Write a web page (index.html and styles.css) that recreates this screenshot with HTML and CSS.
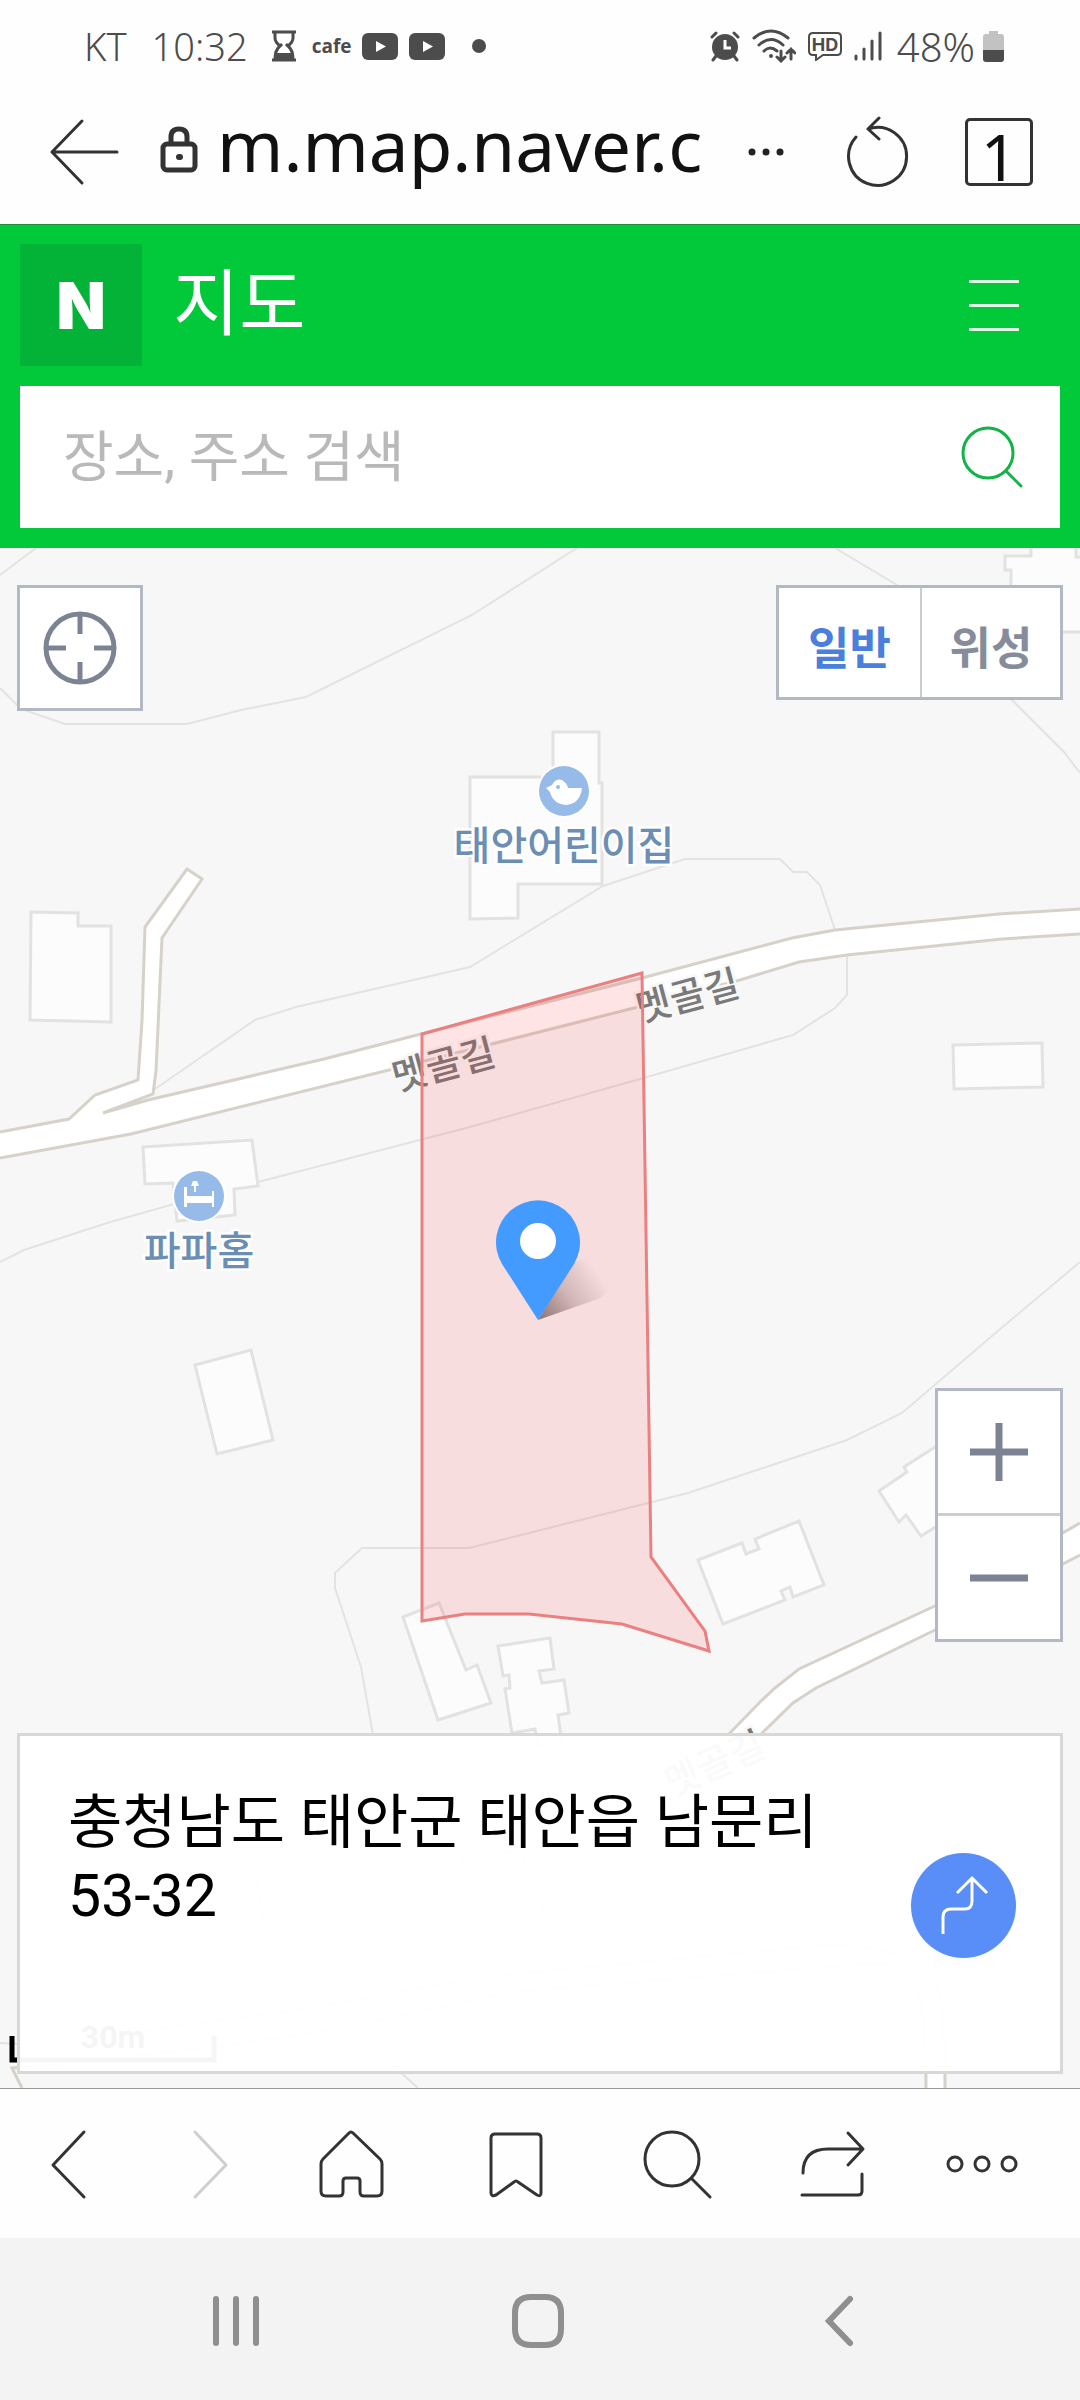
FILE: index.html
```html
<!DOCTYPE html>
<html lang="ko">
<head>
<meta charset="utf-8">
<meta name="viewport" content="width=device-width, initial-scale=1">
<title>네이버 지도</title>
<link rel="stylesheet" href="styles.css">
</head>
<body>
<div class="screen">

  <div class="status">
    <div class="status-left">
      <span class="carrier">KT</span>
      <span class="clock">10:32</span>
      <svg class="hourglass" width="26" height="32" viewBox="0 0 26 32" fill="none" stroke="currentColor" stroke-width="3">
        <path d="M1 2H25M1 30H25M4 2V8Q4 12 9 16Q4 20 4 29M22 2V8Q22 12 17 16Q22 20 22 29M9 16L11 14M17 16L15 14"/>
        <path fill="currentColor" stroke="none" d="M5 23H21V30H5Z"/>
      </svg>
      <span class="cafe">cafe</span>
      <svg width="36" height="27" viewBox="0 0 36 27"><rect width="36" height="27" rx="6" fill="currentColor"/><path d="M14 8V19L24 13.500Z" fill="#fff"/></svg>
      <svg width="36" height="27" viewBox="0 0 36 27"><rect width="36" height="27" rx="6" fill="currentColor"/><path d="M14 8V19L24 13.500Z" fill="#fff"/></svg>
      <span class="dot"></span>
    </div>
    <div class="status-right">
      <svg width="30" height="32" viewBox="0 0 30 32" fill="none" stroke="currentColor" stroke-width="3" stroke-linecap="round">
        <circle cx="15" cy="17" r="13" fill="currentColor" stroke="none"/>
        <path d="M2 7L6 3M28 7L24 3M3 30L6 26M27 30L24 26"/>
        <path d="M15 10V18H21" stroke="#fff" stroke-linecap="butt"/>
      </svg>
      <svg width="44" height="34" viewBox="0 0 44 34" fill="none" stroke="currentColor" stroke-width="3" stroke-linecap="round">
        <path d="M2 9Q19 -5 36 9M7 16Q19 5 31 16M12 22Q18 16 25 22"/>
        <circle cx="19" cy="27" r="2" fill="currentColor" stroke="none"/>
        <path d="M29 22V32M25 28L29 32L33 28M39 30V20M35 24L39 20L43 24" stroke-width="3"/>
      </svg>
      <svg width="34" height="30" viewBox="0 0 34 30">
        <path d="M5 2H29Q33 2 33 6V20Q33 24 29 24H15L8 29V24H5Q1 24 1 20V6Q1 2 5 2Z" fill="none" stroke="currentColor" stroke-width="2"/>
        <text class="hd" x="17" y="20" text-anchor="middle" fill="currentColor">HD</text>
      </svg>
      <svg width="28" height="32" viewBox="0 0 28 32" stroke="currentColor" stroke-width="3" stroke-linecap="round">
        <path d="M2 26V29M10 19V29M18 11V29M26 3V29"/>
      </svg>
      <div class="power">
        <span class="battery-text">48%</span>
        <svg width="21" height="33" viewBox="0 0 21 33"><path d="M6 1H15V4H18Q21 4 21 7V20H0V7Q0 4 3 4H6Z" fill="#c2c2c2"/><path d="M0 20H21V29Q21 32 18 32H3Q0 32 0 29Z" fill="currentColor"/></svg>
      </div>
    </div>
  </div>

  <div class="urlbar">
    <button class="plain" type="button" aria-label="뒤로">
      <svg width="72" height="70" viewBox="0 0 72 70" fill="none" stroke="#333" stroke-width="3" stroke-linecap="round" stroke-linejoin="round"><path d="M34 4L4 35L34 66M4 35H69"/></svg>
    </button>
    <svg class="lock" width="38" height="48" viewBox="0 0 38 48" fill="none" stroke="#333" stroke-width="5">
      <rect x="3" y="18" width="32" height="26" rx="4"/><path d="M11 17V11Q11 3 19 3Q27 3 27 11V17"/><rect x="16" y="28" width="7" height="6" rx="3" fill="#333" stroke="none"/>
    </svg>
    <input class="url" type="text" value="m.map.naver.c" aria-label="주소">
    <button class="plain more" type="button" aria-label="더보기">
      <svg width="36" height="8" viewBox="0 0 36 8" fill="#222"><circle cx="4" cy="4" r="3.500"/><circle cx="18" cy="4" r="3.500"/><circle cx="32" cy="4" r="3.500"/></svg>
    </button>
    <button class="plain reload" type="button" aria-label="새로고침">
      <svg width="64" height="74" viewBox="0 0 64 74" fill="none" stroke="#333" stroke-width="3" stroke-linecap="round" stroke-linejoin="round"><path d="M11 22A29 29 0 1 0 23 14M34 3L23 14L34 24"/></svg>
    </button>
    <button class="tabs" type="button" aria-label="탭 1개">1</button>
  </div>

  <header class="header">
    <div class="brand">
      <a class="logo" href="#" aria-label="네이버">N</a>
      <h1 class="title">지도</h1>
      <button class="plain menu" type="button" aria-label="메뉴"><span></span><span></span><span></span></button>
    </div>
    <form class="search" role="search">
      <input class="search-input" type="search" placeholder="장소, 주소 검색" aria-label="장소, 주소 검색">
      <button class="plain" type="button" aria-label="검색">
        <svg width="62" height="62" viewBox="0 0 62 62" fill="none" stroke="#12b347" stroke-width="3" stroke-linecap="round"><circle cx="27" cy="27" r="25"/><path d="M45 45L60 60"/></svg>
      </button>
    </form>
  </header>

  <main class="map">
    <svg class="canvas" viewBox="0 548 1080 1540" preserveAspectRatio="xMidYMid slice" role="img" aria-label="태안읍 남문리 지도">
      <defs>
        <linearGradient id="shade" gradientUnits="userSpaceOnUse" x1="538" y1="1318" x2="600" y2="1276">
          <stop offset="0" stop-color="#4a2c2c" stop-opacity=".6"/>
          <stop offset=".5" stop-color="#4a2c2c" stop-opacity=".22"/>
          <stop offset="1" stop-color="#4a2c2c" stop-opacity="0"/>
        </linearGradient>
      </defs>
      <rect class="ground" y="548" width="1080" height="1540"/>
      <g class="contour">
        <path d="M36 548L0 575"/>
        <path d="M577 548L472 615L306 697L241 710L187 724H65L21 709L0 688"/>
        <path d="M835 548L902 588L985 660L1012 700L1064 752L1080 773"/>
        <path d="M155 1089L255 1020L296 1007L470 967L603 886L685 859H780L793 872H807L820 885L835 930"/>
        <path d="M847 955V995L835 1008L793 1035L640 1079L470 1127L258 1182L174 1204L107 1223L24 1250L0 1262"/>
        <path d="M1080 1262L999 1330L902 1413L847 1440L688 1493L469 1548H362L335 1573V1588L361 1667L373 1735V1780"/>
        <path d="M351 2030L399 2071L418 2088M0 2043L19 2044"/>
      </g>
      <g class="building">
        <path d="M1031 540V556H1005V570H1011V632H1090V557H1076V540Z"/>
        <path d="M470 777H553V732H599V783H602V884H518V918L470 919Z"/>
        <path d="M31 912L78 913V926H111V1022L30 1020Z"/>
        <path d="M143 1147L252 1140L258 1186L234 1189L235 1215L177 1221L173 1183L145 1184Z"/>
        <path d="M953 1045L1042 1043L1043 1087L954 1089Z"/>
        <path d="M195 1365L251 1350L273 1440L217 1454Z"/>
        <path d="M403 1617L439 1603L466 1670L477 1665L491 1703L438 1720Z"/>
        <path d="M498 1646L550 1638L554 1669L539 1671L542 1683L564 1680L569 1713L558 1715L562 1743L538 1746L535 1729L512 1733L505 1689L510 1688L509 1675L503 1676Z"/>
        <path d="M698 1560L742 1543L746 1554L759 1549L755 1539L799 1521L824 1585L793 1597L790 1587L781 1591L785 1600L723 1624Z"/>
        <path d="M879 1491L907 1472L904 1467L957 1433L990 1493L921 1536L906 1515L899 1522Z"/>
        <path d="M255 1870L300 1850L345 1920L325 1940L265 1932Z"/>
        <path d="M462 1858L520 1850L545 1915L500 1932Z"/>
      </g>
      <g class="road">
        <path class="road-fill" d="M0 1132L69 1119L95 1095L138 1080L142 1021L145 927L187 869L202 879L162 938L156 1071L153 1094L103 1113L148 1100L324 1059L421 1034L642 978L792 938L835 930L999 914L1080 909V934L1002 939L847 955L799 962L740 980L634 1008L389 1070L131 1134L0 1158Z"/>
        <path d="M0 1132L69 1119L95 1095L138 1080L142 1021L145 927L187 869L202 879L162 938L156 1071L153 1094L103 1113L148 1100L324 1059L421 1034L642 978L792 938L835 930L999 914L1080 909"/>
        <path d="M0 1158L131 1134L389 1070L634 1008L740 980L799 962L847 955L1002 939L1080 934"/>
        <path class="road-fill" d="M1080 1523L937 1605L799 1669L775 1688L760 1702L728 1735L650 1800H690L760 1735L793 1703L816 1688L937 1629L1080 1555Z"/>
        <path d="M1080 1523L937 1605L799 1669L775 1688L760 1702L728 1735L650 1800"/>
        <path d="M1080 1555L937 1629L816 1688L793 1703L760 1735L690 1800"/>
        <path class="road-fill" d="M19 2053L172 2027L317 2007L482 1977L826 1945Q888 1945 930 1968Q945 1985 945 2088H926Q926 1985 909 1973Q895 1963 875 1963L510 1992L344 2028L207 2048L19 2070Z"/>
        <path d="M19 2053L172 2027L317 2007L482 1977L826 1945Q888 1945 930 1968Q945 1985 945 2088"/>
        <path d="M926 2088Q926 1985 909 1973Q895 1963 875 1963L510 1992L344 2028L207 2048L12 2068L22 2088"/>
      </g>
      <g class="street" text-anchor="middle">
        <text transform="translate(447 1078) rotate(-15)">멧골길</text>
        <text transform="translate(691 1009) rotate(-15)">멧골길</text>
        <text transform="translate(720 1776) rotate(-24)">멧골길</text>
      </g>
      <path class="parcel" d="M422 1034L642 973L651 1557L705 1631L709 1651L622 1624L529 1614H465L422 1621Z"/>
      <path d="M538 1320L573 1263L606 1250Q626 1284 598 1299Z" fill="url(#shade)"/>
      <path d="M538 1320L502 1264A42 42 0 1 1 574 1264Z" fill="#449bff"/>
      <circle cx="538" cy="1241" r="18" fill="#fff"/>
      <g class="poi" text-anchor="middle">
        <circle cx="564" cy="791" r="25"/>
        <path class="glyph" d="M546 788L552 785Q556 778 562 780Q567 783 568 788H582Q580 804 566 805Q553 804 550 792Z"/>
        <circle class="eye" cx="558" cy="787" r="2"/>
        <text x="564" y="860">태안어린이집</text>
        <circle cx="199" cy="1196" r="25"/>
        <path class="glyph" d="M184 1187H187V1196H212V1191H214V1207H212V1203H187V1207H184ZM191 1186L193 1181H197L199 1186H196V1192H194V1186Z"/>
        <text x="199" y="1265">파파홈</text>
      </g>
      <g class="scale">
        <path d="M12 2036V2060H214V2036"/>
        <text x="113" y="2048" text-anchor="middle">30m</text>
      </g>
    </svg>

    <button class="control locate" type="button" aria-label="현재 위치">
      <svg width="76" height="76" viewBox="0 0 76 76" fill="none" stroke="#7c8494" stroke-width="5"><circle cx="38" cy="38" r="34"/><path d="M38 4V24M38 52V72M4 38H24M52 38H72"/></svg>
    </button>

    <div class="control types">
      <button class="type type-on" type="button" aria-pressed="true">일반</button>
      <button class="type" type="button" aria-pressed="false">위성</button>
    </div>

    <div class="control zoom">
      <button class="zoom-button" type="button" aria-label="확대"><svg width="58" height="58" viewBox="0 0 58 58" stroke="#7c8494" stroke-width="7"><path d="M0 29H58M29 0V58"/></svg></button>
      <button class="zoom-button" type="button" aria-label="축소"><svg width="58" height="58" viewBox="0 0 58 58" stroke="#7c8494" stroke-width="7"><path d="M0 29H58"/></svg></button>
    </div>

    <section class="card">
      <p class="address">충청남도 태안군 태안읍 남문리 53-32</p>
      <button class="route" type="button" aria-label="길찾기">
        <svg width="105" height="105" viewBox="0 0 105 105" fill="none" stroke="#fff" stroke-width="3"><path d="M32 81V64Q32 56 40 56H54Q61 56 61 48V25M46 40L61 25L76 40"/></svg>
      </button>
    </section>
  </main>

  <nav class="toolbar" aria-label="브라우저">
    <button class="plain" type="button" aria-label="이전"><svg width="104" height="104" viewBox="6 2112 104 104"><path d="M84 2132L53 2165L84 2197"/></svg></button>
    <button class="plain" type="button" aria-label="다음" disabled><svg width="104" height="104" viewBox="160 2112 104 104"><path d="M195 2132L226 2165L195 2197"/></svg></button>
    <button class="plain" type="button" aria-label="홈"><svg width="104" height="104" viewBox="314 2112 104 104"><path d="M349 2133Q351 2131 353 2133L380 2159Q382 2161 382 2164V2191Q382 2196 377 2196H364Q360 2196 360 2192V2181Q360 2178 357 2178H346Q343 2178 343 2181V2192Q343 2196 339 2196H326Q321 2196 321 2191V2164Q321 2161 323 2159Z"/></svg></button>
    <button class="plain" type="button" aria-label="북마크"><svg width="104" height="104" viewBox="468 2112 104 104"><path d="M495 2134H537Q541 2134 541 2138V2193Q541 2197 537 2195L518 2182Q516 2180 514 2182L496 2195Q491 2197 491 2193V2138Q491 2134 495 2134Z"/></svg></button>
    <button class="plain" type="button" aria-label="찾기"><svg width="104" height="104" viewBox="622 2112 104 104"><circle cx="672" cy="2159" r="27"/><path d="M692 2179L710 2197"/></svg></button>
    <button class="plain" type="button" aria-label="공유"><svg width="104" height="104" viewBox="776 2112 104 104"><path d="M803 2173Q803 2149 828 2149H862M848 2133L863 2149L848 2165M862 2174V2191Q862 2195 858 2195H802"/></svg></button>
    <button class="plain" type="button" aria-label="메뉴 더보기"><svg width="104" height="104" viewBox="930 2112 104 104"><circle cx="955" cy="2164" r="7"/><circle cx="982" cy="2164" r="7"/><circle cx="1009" cy="2164" r="7"/></svg></button>
  </nav>

  <nav class="system" aria-label="시스템">
    <button class="plain" type="button" aria-label="최근 앱"><svg width="56" height="56" viewBox="0 0 56 56"><path d="M6 6V50M26 6V50M46 6V50"/></svg></button>
    <button class="plain" type="button" aria-label="홈 화면"><svg width="56" height="56" viewBox="0 0 56 56"><path d="M20 4H34Q50 4 50 20V36Q50 52 34 52H20Q4 52 4 36V20Q4 4 20 4Z"/></svg></button>
    <button class="plain" type="button" aria-label="뒤로 가기"><svg width="56" height="56" viewBox="0 0 56 56"><path d="M38 6L17 28L38 50"/></svg></button>
  </nav>
</div>
</body>
</html>
```
FILE: styles.css
```css
* {
  box-sizing: border-box;
}

body {
  margin: 0;
  background: #fefefe;
  color: #000;
  font-family: Roboto, "Noto Sans CJK KR", sans-serif;
}

button,
input {
  margin: 0;
  padding: 0;
  border: 0;
  background: none;
  color: inherit;
  font-family: inherit;
}

svg {
  display: block;
  flex: none;
}

.plain {
  display: flex;
  align-items: center;
  justify-content: center;
  flex: none;
}

.screen {
  display: flex;
  flex-direction: column;
  min-height: 100vh;
}

/* Status bar */
.status {
  display: flex;
  align-items: center;
  justify-content: space-between;
  height: 92px;
  padding: 0 76px 0 84px;
  color: #4c4c4c;
  font-family: "Noto Sans", sans-serif;
  font-size: 38px;
  font-weight: 300;
}

.status-left {
  display: flex;
  align-items: center;
  gap: 11px;
}

.clock {
  margin-left: 14px;
}

.hourglass {
  margin: 0 4px 0 12px;
}

.cafe {
  font-family: "Open Sans", sans-serif;
  font-size: 19px;
  font-weight: 700;
  line-height: 24px;
}

.dot {
  width: 14px;
  height: 14px;
  margin-left: 16px;
  border-radius: 50%;
  background: currentColor;
}

.status-right {
  display: flex;
  align-items: center;
  gap: 12px;
}

.battery-text {
  font-size: 40px;
}

.hd {
  font-family: Inter, sans-serif;
  font-size: 18px;
  font-weight: 700;
}

.power {
  display: flex;
  align-items: center;
  gap: 8px;
  margin-left: 3px;
}

/* Address bar */
.urlbar {
  display: flex;
  align-items: center;
  height: 132px;
  padding: 0 47px 12px 48px;
}

.lock {
  margin: 0 18px 4px 40px;
}

.url {
  flex: 1;
  min-width: 0;
  height: 110px;
  margin-bottom: 16px;
  padding-left: 1px;
  color: #111;
  font-family: "Noto Sans", sans-serif;
  font-size: 71px;
}

.more {
  margin-left: 24px;
}

.reload {
  margin: 0 56px 0 61px;
}

.tabs {
  flex: none;
  width: 68px;
  height: 68px;
  border: 3px solid #333;
  border-radius: 5px;
  color: #111;
  font-family: "Noto Sans", sans-serif;
  font-size: 64px;
  line-height: 72px;
}

/* Green header */
.header {
  padding: 19px 20px 20px;
  border-top: 1px solid #1d8a3c;
  background: #02c93a;
}

.brand {
  display: flex;
  align-items: center;
}

.logo {
  display: flex;
  align-items: center;
  justify-content: center;
  width: 122px;
  height: 122px;
  background: #02b337;
  color: #fff;
  font-family: Inter, sans-serif;
  font-size: 64px;
  font-weight: 900;
  text-decoration: none;
}

.title {
  flex: 1;
  margin: 0 0 0 31px;
  color: #fff;
  font-size: 72px;
  font-weight: 400;
  line-height: 100px;
}

.menu {
  flex-direction: column;
  gap: 21px;
  margin-right: 41px;
}

.menu span {
  width: 50px;
  height: 3px;
  background: #dff9e6;
}

.search {
  display: flex;
  align-items: center;
  height: 142px;
  margin-top: 20px;
  padding: 0 37px 0 43px;
  background: #fff;
}

.search-input {
  flex: 1;
  min-width: 0;
  height: 100%;
  font-size: 55px;
  outline: none;
}

.search-input::placeholder {
  color: #b9b9b9;
  opacity: 1;
}

/* Map */
.map {
  position: relative;
  flex: 1;
  min-height: 1240px;
  overflow: hidden;
}

.canvas {
  position: absolute;
  inset: 0;
  width: 100%;
  height: 100%;
}

.ground {
  fill: #f7f7f7;
}

.contour {
  fill: none;
  stroke: #e3e3e1;
  stroke-width: 2;
}

.building {
  fill: #fcfcfc;
  stroke: #e2e2e2;
  stroke-width: 3;
}

.road {
  fill: none;
  stroke: #d6d2ca;
  stroke-width: 3;
}

.road .road-fill {
  fill: #fff;
  stroke: none;
}

.street {
  fill: #7a7a7a;
  stroke: #f8f8f8;
  stroke-width: 5;
  paint-order: stroke;
  font-size: 38px;
  font-weight: 500;
}

.parcel {
  fill: rgba(255, 30, 40, 0.12);
  stroke: #ea8080;
  stroke-width: 3;
}

.poi {
  fill: #6b8eb5;
  stroke: #fff;
  stroke-width: 5;
  paint-order: stroke;
  font-size: 40px;
  font-weight: 500;
}

.poi circle {
  fill: #96bbe9;
  stroke-width: 4;
}

.poi .glyph {
  fill: #fff;
  stroke: none;
}

.poi .eye {
  stroke: none;
}

.scale {
  fill: #000;
  font-size: 32px;
  font-weight: 700;
}

.scale path {
  fill: none;
  stroke: #000;
  stroke-width: 5;
}

.control {
  position: absolute;
  border: 3px solid #b3b9c4;
  background: rgba(255, 255, 255, 0.97);
}

.locate {
  top: 37px;
  left: 17px;
  display: flex;
  align-items: center;
  justify-content: center;
  width: 126px;
  height: 126px;
}

.types {
  top: 37px;
  right: 17px;
  display: flex;
  height: 115px;
}

.type {
  width: 138px;
  padding-top: 5px;
  color: #868c9b;
  font-size: 45px;
  font-weight: 700;
}

.type-on {
  width: 143px;
  border-right: 2px solid #c8ccd3;
  color: #4a7fdb;
}

.zoom {
  right: 17px;
  bottom: 446px;
  display: flex;
  flex-direction: column;
}

.zoom-button {
  display: flex;
  align-items: center;
  justify-content: center;
  width: 122px;
  height: 122px;
}

.zoom-button + .zoom-button {
  height: 126px;
  border-top: 3px solid #cdced4;
}

.card {
  position: absolute;
  right: 17px;
  bottom: 14px;
  left: 17px;
  display: flex;
  align-items: center;
  gap: 40px;
  min-height: 341px;
  padding: 50px 44px 46px 48px;
  border: 3px solid #d8d8d8;
  background: rgba(255, 255, 255, 0.96);
}

.address {
  flex: 1;
  align-self: flex-start;
  margin: 0;
  font-size: 59px;
  line-height: 73px;
  word-break: keep-all;
}

.route {
  flex: none;
  width: 105px;
  height: 105px;
  border-radius: 50%;
  background: #598df8;
}

/* Browser toolbar */
.toolbar {
  display: flex;
  align-items: center;
  justify-content: space-between;
  height: 150px;
  padding: 0 46px 0 6px;
  border-top: 1px solid #9a9a9a;
}

.toolbar svg {
  fill: none;
  stroke: #333;
  stroke-width: 3;
  stroke-linecap: round;
  stroke-linejoin: round;
}

.toolbar button:disabled svg {
  stroke: #cfcfcf;
}

/* System navigation */
.system {
  display: grid;
  grid-template-columns: repeat(3, 1fr);
  height: 162px;
  padding: 4px 89px 0 87px;
  background: #f3f3f3;
}

.system svg {
  fill: none;
  stroke: #8f8f8f;
  stroke-width: 6;
  stroke-linecap: round;
}
```
